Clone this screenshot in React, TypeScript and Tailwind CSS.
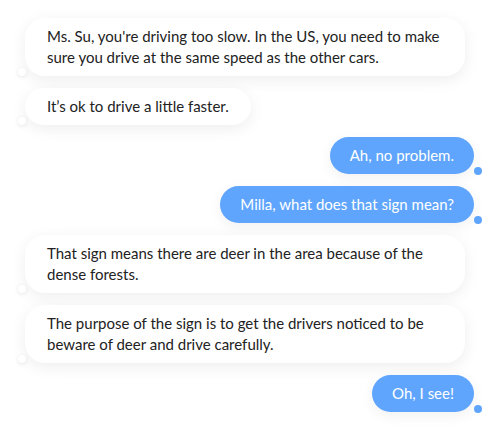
import { ReactNode } from "react";

type Msg = { from: "bot" | "me"; lines: string[] };

const messages: Msg[] = [
    {
        from: "bot",
        lines: [
            "Ms. Su, you're driving too slow. In the US, you need to make",
            "sure you drive at the same speed as the other cars.",
        ],
    },
    { from: "bot", lines: ["It\u2019s ok to drive a little faster."] },
    { from: "me", lines: ["Ah, no problem."] },
    { from: "me", lines: ["Milla, what does that sign mean?"] },
    {
        from: "bot",
        lines: [
            "That sign means there are deer in the area because of the",
            "dense forests.",
        ],
    },
    {
        from: "bot",
        lines: [
            "The purpose of the sign is to get the drivers noticed to be",
            "beware of deer and drive carefully.",
        ],
    },
    { from: "me", lines: ["Oh, I see!"] },
];

function Bubble({ msg }: { msg: Msg }) {
    const multi = msg.lines.length > 1;
    const content: ReactNode[] = [];
    msg.lines.forEach((l, i) => {
        if (i > 0) content.push(<br key={"br" + i} />);
        content.push(<span key={i}>{l}</span>);
    });

    if (msg.from === "me") {
        return (
            <div className="flex justify-end pr-[26px]">
                <div className="relative rounded-[19px] bg-[#5fa5fd] px-5 py-2 text-[15px] leading-[21px] text-white whitespace-nowrap shadow-[0_4px_14px_rgba(0,0,0,0.06)]">
                    {content}
                    <span className="absolute right-[-8px] bottom-[-1px] h-2 w-2 rounded-full bg-[#5fa5fd]" />
                </div>
            </div>
        );
    }

    return (
        <div className="flex justify-start pl-[25px]">
            <div
                className={`relative bg-white px-[22px] py-2 text-[15px] leading-[21px] text-[#222] whitespace-nowrap shadow-[0_4px_16px_rgba(0,0,0,0.07)] ${
                    multi ? "w-[440px] rounded-[20px]" : "rounded-[19px]"
                }`}
            >
                {content}
                <span className="absolute left-[-7px] bottom-0 h-2 w-2 rounded-full bg-white shadow-[0_1px_4px_rgba(0,0,0,0.1)]" />
            </div>
        </div>
    );
}

export default function App() {
    return (
        <div
            className="h-[431px] w-[500px] bg-white pt-[18px] flex flex-col gap-3"
            style={{ fontFamily: "Lato, 'Open Sans', sans-serif" }}
        >
            {messages.map((m, i) => (
                <Bubble key={i} msg={m} />
            ))}
        </div>
    );
}
